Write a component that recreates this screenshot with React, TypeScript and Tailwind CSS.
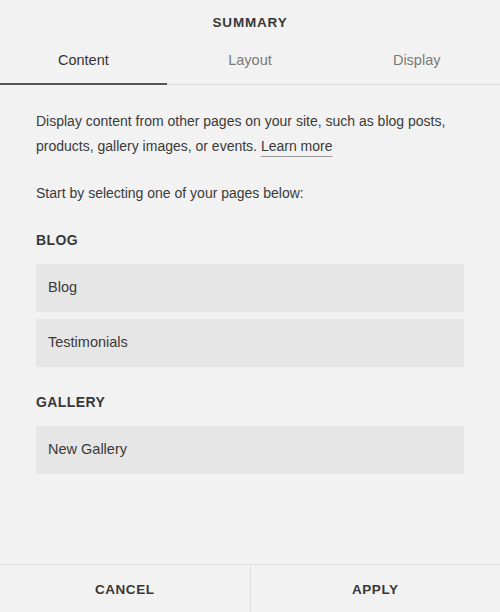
import React from 'react'

const tabs = ['Content', 'Layout', 'Display']

const groups = [
  { title: 'BLOG', items: ['Blog', 'Testimonials'] },
  { title: 'GALLERY', items: ['New Gallery'] },
]

export default function App() {
  return (
    <div
      className="w-[500px] h-[612px] bg-[#f2f2f2] text-[#3a3a3a] flex flex-col"
      style={{ fontFamily: '"Liberation Sans", Arial, sans-serif' }}
    >
      <div className="h-[46px] flex items-center justify-center pt-[1px]">
        <h1 className="text-[13.5px] font-bold tracking-[0.06em] text-[#383838]">SUMMARY</h1>
      </div>

      <div className="flex border-b border-[#dcdcdc] h-[39px]">
        {tabs.map((t, i) => (
          <div
            key={t}
            className={
              'flex-1 flex items-start justify-center pt-[4px] text-[14.5px] ' +
              (i === 0 ? 'text-[#333] border-b-2 border-[#555] -mb-[1px]' : 'text-[#7a7a7a]')
            }
          >
            {t}
          </div>
        ))}
      </div>

      <div className="flex-1 px-[36px] pt-[24px]">
        <p className="text-[14px] leading-[25px]">
          Display content from other pages on your site, such as blog posts, products, gallery images, or
          events.{' '}
          <a className="underline decoration-[#9a9a9a] underline-offset-[5px]">Learn more</a>
        </p>
        <p className="text-[14px] leading-[25px] mt-[22px]">Start by selecting one of your pages below:</p>

        {groups.map((g, gi) => (
          <div key={g.title} className={gi === 0 ? 'mt-[24px]' : 'mt-[25px]'}>
            <h2 className="text-[14px] font-bold tracking-[0.03em] text-[#383838] leading-[20px]">{g.title}</h2>
            <div className="mt-[14px] flex flex-col gap-[7px]">
              {g.items.map((it) => (
                <div key={it} className="h-[48px] bg-[#e6e6e6] flex items-center px-[12px] text-[14.5px]">
                  {it}
                </div>
              ))}
            </div>
          </div>
        ))}
      </div>

      <div className="h-[48px] flex border-t border-[#e0e0e0]">
        <button className="flex-1 pt-[3px] text-[13.5px] font-bold tracking-[0.04em] text-[#383838]">CANCEL</button>
        <div className="w-px bg-[#e0e0e0]" />
        <button className="flex-1 pt-[3px] text-[13.5px] font-bold tracking-[0.04em] text-[#383838]">APPLY</button>
      </div>
    </div>
  )
}
